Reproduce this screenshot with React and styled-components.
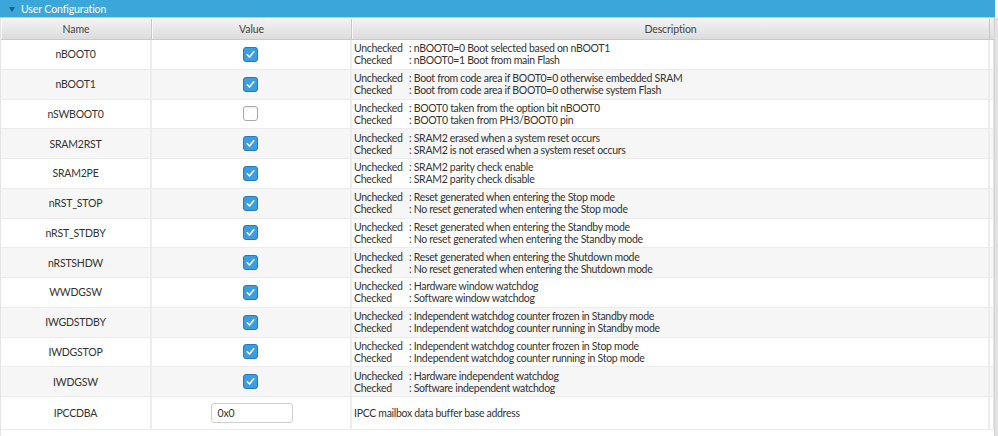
import React from "react";
import styled, { createGlobalStyle } from "styled-components";

const GlobalStyle = createGlobalStyle`
  body {
    margin: 0;
    background: #ffffff;
    font-family: Lato, "Open Sans", sans-serif;
    font-size: 10px;
    color: #333;
  }
`;

const Panel = styled.div`
  width: 998px;
  height: 436px;
  overflow: hidden;
  display: flex;
  flex-direction: column;
  background: #fff;
`;

const TitleBar = styled.div`
  height: 17px;
  display: flex;
  align-items: center;
  gap: 6px;
  padding-left: 9px;
  margin-right: 3px;
  background: #3ba6d9;
  border-bottom: 1px solid #9fd6f0;
  color: #ffffff;
  font-size: 10.5px;
  letter-spacing: -0.1px;
`;

const Arrow = styled.span`
  width: 0;
  height: 0;
  border-left: 3.5px solid transparent;
  border-right: 3.5px solid transparent;
  border-top: 5px solid #1d5f80;
  margin-top: 1px;
`;

const Body = styled.div`
  flex: 1;
  display: flex;
`;

const Table = styled.div`
  width: 994px;
  display: flex;
  flex-direction: column;
  border-left: 1px solid #e4e4e4;
  box-sizing: border-box;
`;

const Scrollbar = styled.div`
  width: 4px;
  background: #e2e2e2;
  border-left: 1px solid #d4d4d4;
`;

const cols = "151px 200px 638px 4px";

const HeadRow = styled.div`
  display: grid;
  grid-template-columns: ${cols};
  height: 21px;
  margin-top: 1px;
  background: linear-gradient(#f3f3f3, #dcdcdc);
  border-bottom: 1px solid #c9c9c9;
  box-sizing: border-box;
`;

const HeadCell = styled.div`
  display: flex;
  align-items: center;
  justify-content: center;
  border-right: 1px solid #c8c8c8;
  box-shadow: inset 1px 0 0 #f8f8f8;
  color: #444;
  font-size: 10.5px;
  letter-spacing: -0.1px;
`;

const Row = styled.div`
  display: grid;
  grid-template-columns: ${cols};
  height: ${(p) => p.$h || 29.75}px;
  background: ${(p) => (p.$alt ? "#f6f6f6" : "#ffffff")};
  border-bottom: 1px solid #ececec;
  box-sizing: border-box;
`;

const Cell = styled.div`
  display: flex;
  align-items: center;
  justify-content: ${(p) => (p.$left ? "flex-start" : "center")};
  padding-left: ${(p) => (p.$left ? "2px" : "0")};
  border-right: 2px solid #ededed;
  color: #333;
  font-size: 10.5px;
  letter-spacing: -0.2px;
`;

const Desc = styled.div`
  display: grid;
  grid-template-columns: 55px auto;
  line-height: 12px;
  white-space: nowrap;
  font-size: 10.5px;
  letter-spacing: -0.3px;
`;

const Filler = styled.div`
  border-right: 1px solid #e4e4e4;
`;

const Box = styled.span`
  width: 15px;
  height: 15px;
  margin-left: -2px;
  box-sizing: border-box;
  border-radius: 3px;
  display: flex;
  align-items: center;
  justify-content: center;
  background: ${(p) => (p.$on ? "#3c9ee2" : "#ffffff")};
  border: 1px solid ${(p) => (p.$on ? "#2a78b8" : "#a9a9a9")};
  box-shadow: ${(p) => (p.$on ? "none" : "inset 0 1px 1px #eee")};
`;

const Input = styled.div`
  width: 82px;
  height: 20px;
  box-sizing: border-box;
  border: 1px solid #cfcfcf;
  border-radius: 3px;
  background: #fff;
  padding-left: 6px;
  display: flex;
  align-items: center;
  margin-left: 1px;
  color: #333;
`;

const Check = () => (
  <svg width="11" height="11" viewBox="0 0 11 11">
    <path d="M2.3 5.8 L4.5 8 L8.8 2.8" fill="none" stroke="#fff" strokeWidth="1.6" strokeLinecap="round" strokeLinejoin="round" />
  </svg>
);

const rows = [
  ["nBOOT0", true, "nBOOT0=0 Boot selected based on nBOOT1", "nBOOT0=1 Boot from main Flash"],
  ["nBOOT1", true, "Boot from code area if BOOT0=0 otherwise embedded SRAM", "Boot from code area if BOOT0=0 otherwise system Flash"],
  ["nSWBOOT0", false, "BOOT0 taken from the option bit nBOOT0", "BOOT0 taken from PH3/BOOT0 pin"],
  ["SRAM2RST", true, "SRAM2 erased when a system reset occurs", "SRAM2 is not erased when a system reset occurs"],
  ["SRAM2PE", true, "SRAM2 parity check enable", "SRAM2 parity check disable"],
  ["nRST_STOP", true, "Reset generated when entering the Stop mode", "No reset generated when entering the Stop mode"],
  ["nRST_STDBY", true, "Reset generated when entering the Standby mode", "No reset generated when entering the Standby mode"],
  ["nRSTSHDW", true, "Reset generated when entering the Shutdown mode", "No reset generated when entering the Shutdown mode"],
  ["WWDGSW", true, "Hardware window watchdog", "Software window watchdog"],
  ["IWGDSTDBY", true, "Independent watchdog counter frozen in Standby mode", "Independent watchdog counter running in Standby mode"],
  ["IWDGSTOP", true, "Independent watchdog counter frozen in Stop mode", "Independent watchdog counter running in Stop mode"],
  ["IWDGSW", true, "Hardware independent watchdog", "Software independent watchdog"],
];

export default function App() {
  return (
    <>
      <GlobalStyle />
      <Panel>
        <TitleBar>
          <Arrow />
          User Configuration
        </TitleBar>
        <Body>
          <Table>
            <HeadRow>
              <HeadCell>Name</HeadCell>
              <HeadCell>Value</HeadCell>
              <HeadCell>Description</HeadCell>
              <Filler />
            </HeadRow>
            {rows.map(([name, on, off, checked], i) => (
              <Row key={name} $alt={i % 2 === 1}>
                <Cell>{name}</Cell>
                <Cell>
                  <Box $on={on}>{on && <Check />}</Box>
                </Cell>
                <Cell $left>
                  <Desc>
                    <span>Unchecked</span>
                    <span>: {off}</span>
                    <span>Checked</span>
                    <span>: {checked}</span>
                  </Desc>
                </Cell>
                <Filler />
              </Row>
            ))}
            <Row $h={33}>
              <Cell>IPCCDBA</Cell>
              <Cell>
                <Input>0x0</Input>
              </Cell>
              <Cell $left>
                <Desc as="span">IPCC mailbox data buffer base address</Desc>
              </Cell>
              <Filler />
            </Row>
          </Table>
          <Scrollbar />
        </Body>
      </Panel>
    </>
  );
}
